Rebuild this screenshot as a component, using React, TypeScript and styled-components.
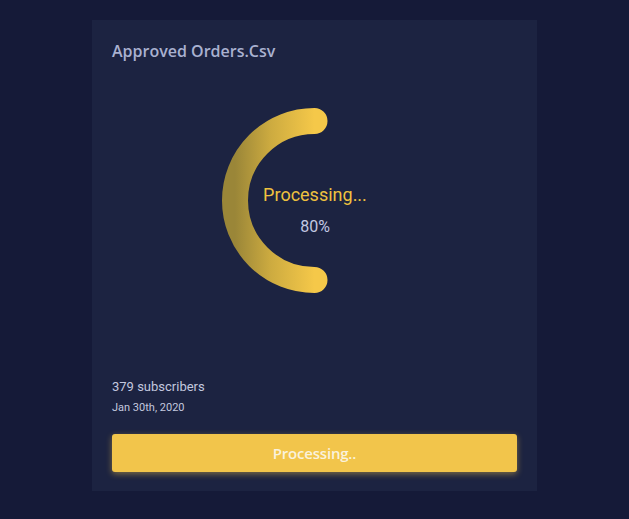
import React from "react";
import styled, { createGlobalStyle } from "styled-components";

const Global = createGlobalStyle`
  html, body { margin: 0; padding: 0; }
  body {
    background: #151a38;
    width: 629px;
    height: 519px;
    overflow: hidden;
    font-family: Roboto, "Liberation Sans", sans-serif;
  }
`;

const Page = styled.div`
  display: flex;
  justify-content: flex-start;
  padding: 20px 0 0 92px;
  box-sizing: border-box;
  width: 629px;
  height: 519px;
`;

const Card = styled.div`
  width: 445px;
  height: 471px;
  box-sizing: border-box;
  background: #1c2341;
  padding: 20px 20px 19px;
  display: flex;
  flex-direction: column;
`;

const Title = styled.div`
  font-family: "Open Sans", "Noto Sans", sans-serif;
  font-weight: 600;
  font-size: 16px;
  line-height: 22px;
  color: #a9b1d0;
`;

const SpinnerWrap = styled.div`
  position: relative;
  width: 185px;
  height: 185px;
  margin: 46px auto 0;
`;

const Center = styled.div`
  position: absolute;
  inset: 0;
  display: flex;
  flex-direction: column;
  align-items: center;
  justify-content: flex-start;
  padding: 76px 0 0 1px;
`;

const Status = styled.div`
  font-size: 18px;
  line-height: 22px;
  color: #efc13f;
`;

const Percent = styled.div`
  font-size: 16px;
  line-height: 20px;
  color: #c2c8e2;
  margin-top: 11px;
`;

const Subscribers = styled.div`
  margin-top: 85px;
  font-size: 13px;
  line-height: 18px;
  color: #c3c8df;
`;

const DateText = styled.div`
  margin-top: 4px;
  font-size: 11px;
  line-height: 16px;
  color: #c3c8df;
`;

const Button = styled.button`
  margin-top: 18px;
  height: 38px;
  width: 100%;
  border: none;
  border-radius: 3px;
  background: #f2c54b;
  box-shadow: 0 2px 6px rgba(242, 197, 75, 0.45);
  color: #faf2dc;
  font-family: "Open Sans", "Noto Sans", sans-serif;
  font-weight: 600;
  font-size: 15px;
  letter-spacing: -0.2px;
  cursor: pointer;
`;

function Arc() {
  const r = 79.5;
  const cx = 92.5;
  const cy = 92.5;
  return (
    <svg width="185" height="185" viewBox="0 0 185 185">
      <defs>
        <linearGradient id="arcGrad" x1="0" y1="0" x2="1" y2="0">
          <stop offset="0" stopColor="#9a8638" />
          <stop offset="0.45" stopColor="#cdab40" />
          <stop offset="1" stopColor="#f5c849" />
        </linearGradient>
      </defs>
      <path
        d={`M ${cx} ${cy - r} A ${r} ${r} 0 0 0 ${cx} ${cy + r}`}
        fill="none"
        stroke="url(#arcGrad)"
        strokeWidth="26"
        strokeLinecap="round"
      />
    </svg>
  );
}

export default function App() {
  return (
    <>
      <Global />
      <Page>
        <Card>
          <Title>Approved Orders.Csv</Title>
          <SpinnerWrap>
            <Arc />
            <Center>
              <Status>Processing...</Status>
              <Percent>80%</Percent>
            </Center>
          </SpinnerWrap>
          <Subscribers>379 subscribers</Subscribers>
          <DateText>Jan 30th, 2020</DateText>
          <Button>Processing..</Button>
        </Card>
      </Page>
    </>
  );
}
